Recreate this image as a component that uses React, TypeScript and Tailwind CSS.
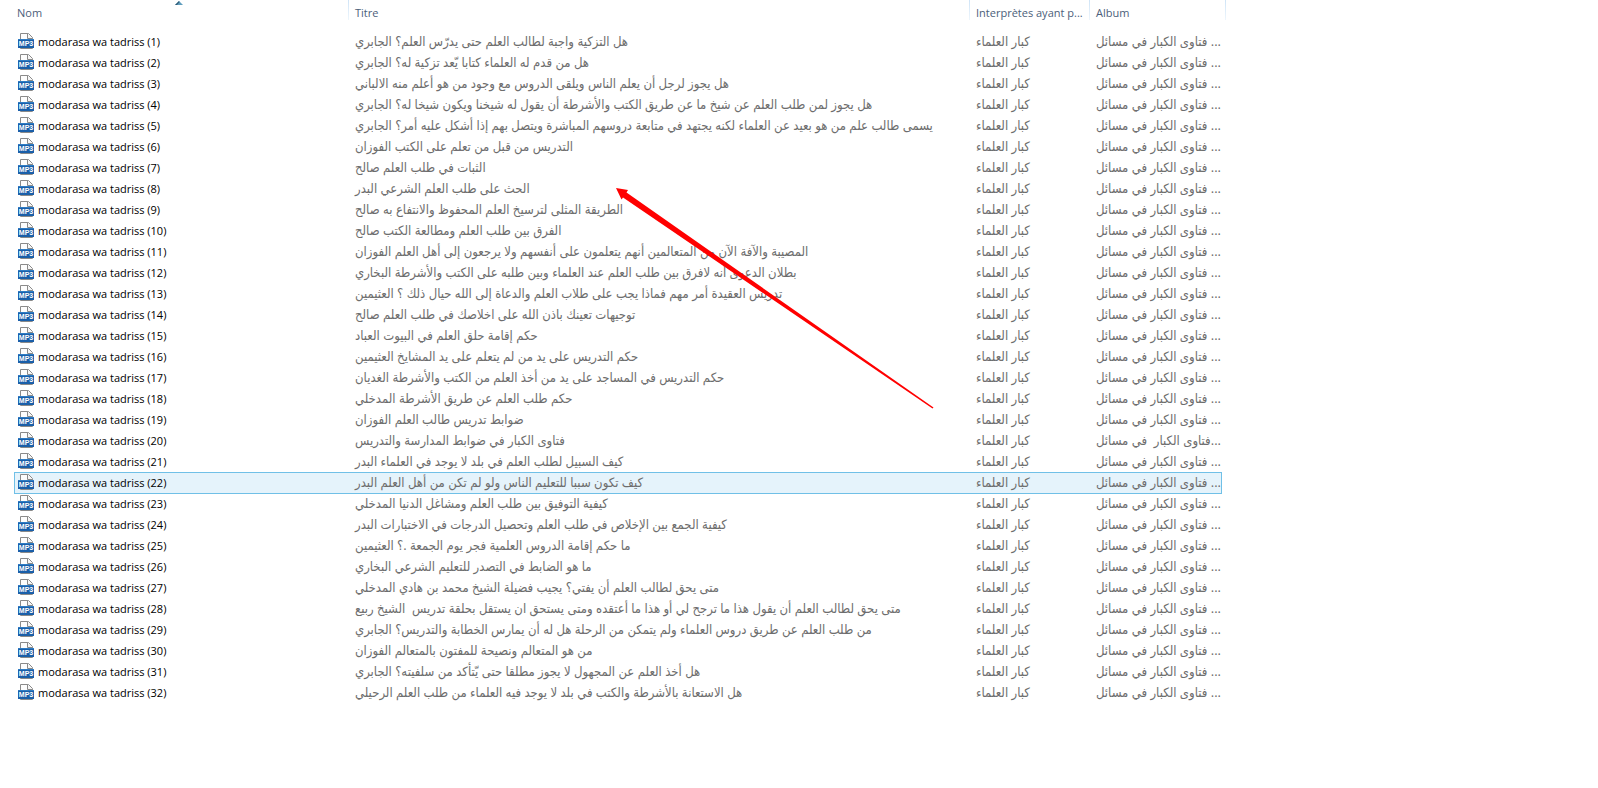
import { useState } from "react";
import clsx from "clsx";

const ARTIST = "كبار العلماء";
const ALBUM = "فتاوى الكبار في مسائل ...";

const titles = [
    "هل التزكية واجبة لطالب العلم حتى يدرّس العلم؟ الجابري",
    "هل من قدم له العلماء كتابا يّعد تزكية له؟ الجابري",
    "هل يجوز لرجل أن يعلم الناس ويلقى الدروس مع وجود من هو أعلم منه الالباني",
    "هل يجوز لمن طلب العلم عن شيخ ما عن طريق الكتب والأشرطة أن يقول له شيخنا ويكون شيخا له؟ الجابري",
    "يسمى طالب علم من هو بعيد عن العلماء لكنه يجتهد في متابعة دروسهم المباشرة ويتصل بهم إذا أشكل عليه أمر؟ الجابري",
    "التدريس من قبل من تعلم على الكتب الفوزان",
    "الثبات في طلب العلم صالح",
    "الحث على طلب العلم الشرعي البدر",
    "الطريقة المثلى لترسيخ العلم المحفوظ والانتفاع به صالح",
    "الفرق بين طلب العلم ومطالعة الكتب صالح",
    "المصيبة والآفة الآن من المتعالمين أنهم يتعلمون على أنفسهم ولا يرجعون إلى أهل العلم الفوزان",
    "بطلان الدعوى أنه لافرق بين طلب العلم عند العلماء وبين طلبه على الكتب والأشرطة البخاري",
    "تدريس العقيدة أمر مهم فماذا يجب على طلاب العلم والدعاة إلى الله حيال ذلك ؟ العثيمين",
    "توجيهات تعينك باذن الله على اخلاصك في طلب العلم صالح",
    "حكم إقامة حلق العلم في البيوت العباد",
    "حكم التدريس على يد من لم يتعلم على يد المشايخ العثيمين",
    "حكم التدريس في المساجد على يد من أخذ العلم من الكتب والأشرطة الغديان",
    "حكم طلب العلم عن طريق الأشرطة المدخلي",
    "ضوابط تدريس طالب العلم الفوزان",
    "فتاوى الكبار في ضوابط المدارسة والتدريس",
    "كيف السبيل لطلب العلم في بلد لا يوجد في العلماء البدر",
    "كيف تكون سببا للتعليم الناس ولو لم تكن من أهل العلم البدر",
    "كيفية التوفيق بين طلب العلم ومشاغل الدنيا المدخلي",
    "كيفية الجمع بين الإخلاص في طلب العلم وتحصيل الدرجات في الاختبارات البدر",
    "ما حكم إقامة الدروس العلمية فجر يوم الجمعة .؟ العثيمين",
    "ما هو الضابط في التصدر للتعليم الشرعي البخاري",
    "متى يحق لطالب العلم أن يفتي؟ يجيب فضيلة الشيخ محمد بن هادي المدخلي",
    "متى يحق لطالب العلم أن يقول هذا ما ترجح لي أو هذا ما أعتقده ومتى يستحق ان يستقل بحلقة تدريس  الشيخ ربيع",
    "من طلب العلم عن طريق دروس العلماء ولم يتمكن من الرحلة هل له أن يمارس الخطابة والتدريس؟ الجابري",
    "من هو المتعالم ونصيحة للمفتون بالمتعالم الفوزان",
    "هل أخذ العلم عن المجهول لا يجوز مطلقا حتى يّتأكد من سلفيته؟ الجابري",
    "هل الاستعانة بالأشرطة والكتب في بلد لا يوجد فيه العلماء من طلب العلم الرحيلي",
];

const files = titles.map((title, i) => ({
    name: `modarasa wa tadriss (${i + 1})`,
    title,
    artist: ARTIST,
    album: i === 19 ? "فتاوى الكبار  في مسائل..." : ALBUM,
}));

function Mp3Icon() {
    return (
        <svg width="16" height="16" viewBox="0 0 16 16" className="shrink-0" aria-hidden="true">
            <path d="M2.5 0.5H10.5L14.5 4.5V15.5H2.5Z" fill="#fdfdfd" stroke="#8a8a8a" />
            <path d="M9.5 0.5V5.5H14.5" fill="#f4f4f4" stroke="#8a8a8a" />
            <rect x="0" y="6" width="16" height="9" fill="#1a5fa9" />
            <rect x="0" y="6" width="16" height="1" fill="#2f7cc4" />
            <text x="8" y="13" textAnchor="middle" fontSize="7" fontWeight="700" fill="#fff" className="font-['Liberation_Sans',sans-serif]">
                MP3
            </text>
        </svg>
    );
}

function Separator({ className }: { className: string }) {
    return <span className={clsx("absolute top-0 h-5 w-px bg-linear-to-b from-[#cfe4f7] to-[#eef6fc]", className)} />;
}

function HeaderCell({ label, first, last, sorted }: { label: string; first?: boolean; last?: boolean; sorted?: boolean }) {
    return (
        <th scope="col" className="relative p-0 text-left align-top font-normal" aria-sort={sorted ? "ascending" : undefined}>
            {!first && <Separator className="left-0" />}
            <button type="button" className={clsx("block w-full text-left leading-[26px] whitespace-nowrap text-[#4c607a]", first ? "pl-[3px]" : "pl-[7px]")}>
                {label}
            </button>
            {sorted && (
                <svg width="8" height="4" viewBox="0 0 8 4" className="absolute top-px left-1/2 -ml-1.5" aria-hidden="true">
                    <path d="M4 0L8 4H0Z" fill="#5f9dbd" />
                    <path d="M4 0L0 4H2L4.5 1Z" fill="#2f5a75" />
                </svg>
            )}
            {last && <Separator className="-right-1" />}
        </th>
    );
}

function ArabicCell({ children }: { children: string }) {
    return (
        <td className="p-0 pl-[7px] font-['Open_Sans','DejaVu_Sans_Condensed','DejaVu_Sans',sans-serif] text-[13px] leading-[21px] whitespace-pre text-[#6d6d6d]" lang="ar">
            {children}
        </td>
    );
}

export default function App() {
    const [selected, setSelected] = useState(21);

    return (
        <main className="relative min-h-screen overflow-hidden bg-white pl-3.5 font-['Open_Sans','Noto_Sans',sans-serif] text-[11px]">
            <table className="w-[1208px] table-fixed border-collapse">
                <colgroup>
                    <col className="w-[334px]" />
                    <col />
                    <col className="w-[120px]" />
                    <col className="w-[133px]" />
                </colgroup>
                <thead>
                    <tr className="h-[31px]">
                        <HeaderCell label="Nom" first sorted />
                        <HeaderCell label="Titre" />
                        <HeaderCell label="Interprètes ayant p..." />
                        <HeaderCell label="Album" last />
                    </tr>
                </thead>
                <tbody>
                    {files.map((file, i) => (
                        <tr
                            key={file.name}
                            onClick={() => setSelected(i)}
                            className={clsx(
                                "h-[21px] leading-[21px]",
                                i === selected && "bg-[#e5f3fb] shadow-[inset_1px_1px_0_#70c0e7,inset_-1px_0_0_#70c0e7,0_1px_0_#70c0e7]"
                            )}
                        >
                            <td className="p-0 pl-1 text-black">
                                <div className="flex gap-1">
                                    <span className="pt-0.5">
                                        <Mp3Icon />
                                    </span>
                                    <span className="whitespace-nowrap">{file.name}</span>
                                </div>
                            </td>
                            <ArabicCell>{file.title}</ArabicCell>
                            <ArabicCell>{file.artist}</ArabicCell>
                            <ArabicCell>{file.album}</ArabicCell>
                        </tr>
                    ))}
                </tbody>
            </table>

            {/* Hand-placed annotation arrow */}
            <svg width="318" height="221" viewBox="0 0 318 221" className="pointer-events-none absolute top-[188px] left-[616px]" aria-hidden="true">
                <path d="M0 0L12 2L10.5 4.5L317.5 219.5L316.5 220.5L7 9.5L5.5 11.5Z" fill="#ff0000" />
            </svg>
        </main>
    );
}
